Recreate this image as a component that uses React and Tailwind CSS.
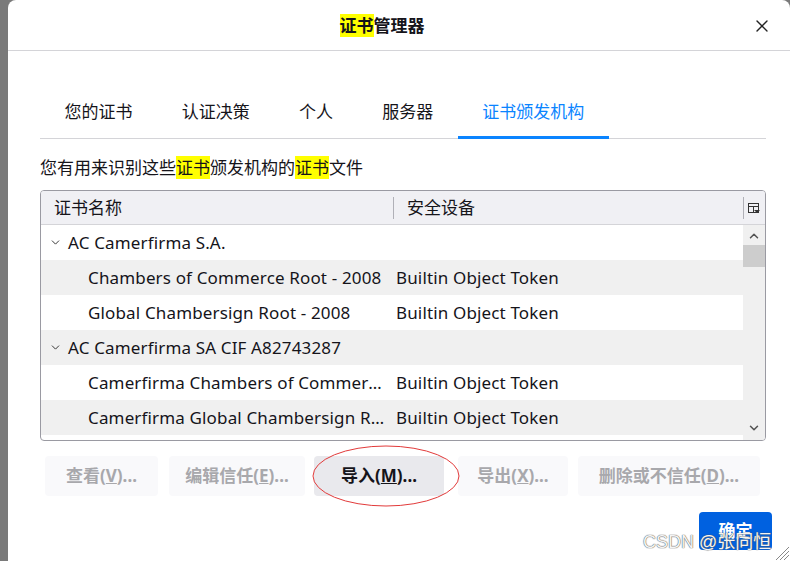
import { X, ChevronDown, ChevronUp } from 'lucide-react';

const font = { fontFamily: '"Noto Sans", "Noto Sans CJK SC", sans-serif' };

const tabs = ['您的证书', '认证决策', '个人', '服务器', '证书颁发机构'];

const rows = [
  { group: true, name: 'AC Camerfirma S.A.' },
  { name: 'Chambers of Commerce Root - 2008', token: 'Builtin Object Token' },
  { name: 'Global Chambersign Root - 2008', token: 'Builtin Object Token' },
  { group: true, name: 'AC Camerfirma SA CIF A82743287' },
  { name: 'Camerfirma Chambers of Commerce Root', token: 'Builtin Object Token' },
  { name: 'Camerfirma Global Chambersign Root', token: 'Builtin Object Token' },
];

const buttons = [
  { label: '查看', key: 'V', w: 'w-[113px]', ml: 'ml-[5px]' },
  { label: '编辑信任', key: 'E', w: 'w-[136px]', ml: 'ml-[11px]' },
  { label: '导入', key: 'M', w: 'w-[130px]', ml: 'ml-[9px]', active: true },
  { label: '导出', key: 'X', w: 'w-[110px]', ml: 'ml-[14px]' },
  { label: '删除或不信任', key: 'D', w: 'w-[182px]', ml: 'ml-[10px]' },
];

function ColumnPicker() {
  return (
    <svg width="12" height="12" viewBox="0 0 12 12" className="text-[#333]">
      <rect x="0.5" y="1.5" width="10" height="9" fill="none" stroke="currentColor" />
      <line x1="0.5" y1="4.5" x2="10.5" y2="4.5" stroke="currentColor" />
      <line x1="5.5" y1="4.5" x2="5.5" y2="10.5" stroke="currentColor" />
      <path d="M6 8 L12 8 L9 11 Z" fill="currentColor" />
    </svg>
  );
}

export default function App() {
  return (
    <div className="relative w-[790px] h-[561px] overflow-hidden bg-[#7a7a7a] pl-2" style={font}>
      <div className="h-[570px] w-[782px] bg-white rounded-t-lg flex flex-col">
        {/* header */}
        <div className="relative h-[51px] shrink-0 border-b border-[#d4d4d8] flex items-center justify-center pr-[34px]">
          <h1 className="text-[17px] font-bold text-[#15141a] leading-none">
            <span className="bg-[#ffff00]">证书</span>管理器
          </h1>
          <X className="absolute right-[18px] top-[16px] w-[20px] h-[20px] text-[#222]" strokeWidth={1.6} />
        </div>

        <div className="pl-[32px] pr-[24px]">
          {/* tabs */}
          <div className="mt-[36px] flex border-b border-[#d4d4d8]">
            {tabs.map((t, i) => (
              <div
                key={t}
                className={`h-[52px] px-[24.6px] flex items-center text-[17px] border-b-[3px] -mb-px ${
                  i === 4 ? 'text-[#0a84ff] border-[#0a84ff]' : 'text-[#15141a] border-transparent'
                }`}
              >
                {t}
              </div>
            ))}
          </div>

          <p className="mt-[17px] text-[17px] leading-[24px] text-[#15141a]">
            您有用来识别这些<span className="bg-[#ffff00]">证书</span>颁发机构的<span className="bg-[#ffff00]">证书</span>文件
          </p>

          {/* tree */}
          <div className="mt-[10px] h-[251px] border border-[#9a9aa2] rounded-[4px] overflow-hidden flex flex-col">
            <div className="h-[34px] shrink-0 bg-[#f0f0f4] border-b border-[#d4d4d8] flex items-center text-[17px] text-[#15141a]">
              <div className="w-[352px] pl-[13px]">证书名称</div>
              <div className="w-px h-[22px] bg-[#b0b0b7]" />
              <div className="flex-1 pl-[13px]">安全设备</div>
              <div className="w-px h-[22px] bg-[#b0b0b7] mr-[3px]" />
              <div className="w-[14px] flex justify-center mr-[4px]"><ColumnPicker /></div>
            </div>
            <div className="flex flex-1 min-h-0">
              <div className="flex-1 min-w-0">
                {rows.map((r, i) => (
                  <div
                    key={r.name}
                    className={`h-[35px] flex items-center text-[17px] text-[#15141a] tracking-[0.15px] ${i % 2 ? 'bg-[#f0f0f0]' : 'bg-white'}`}
                  >
                    {r.group ? (
                      <div className="flex items-center pl-[8px]">
                        <ChevronDown className="w-[13px] h-[13px] text-[#333] mr-[6px]" strokeWidth={1.8} />
                        <span>{r.name}</span>
                      </div>
                    ) : (
                      <>
                        <div className="w-[348px] pl-[47px] pr-[2px] truncate">{r.name}</div>
                        <div className="pl-[7px]">{r.token}</div>
                      </>
                    )}
                  </div>
                ))}
              </div>
              <div className="w-[22px] bg-[#f0f0f0] flex flex-col items-center">
                <div className="h-[20px] w-full flex items-center justify-center pt-[2px]">
                  <ChevronUp className="w-[14px] h-[14px] text-[#555]" strokeWidth={2.6} />
                </div>
                <div className="h-[22px] w-full bg-[#cdcdcd]" />
                <div className="flex-1" />
                <div className="h-[20px] w-full flex items-center justify-center pb-[4px]">
                  <ChevronDown className="w-[14px] h-[14px] text-[#555]" strokeWidth={2.6} />
                </div>
              </div>
            </div>
          </div>

          {/* buttons */}
          <div className="mt-[15px] flex">
            {buttons.map((b) => (
              <button
                key={b.label}
                type="button"
                className={`${b.w} ${b.ml} h-[40px] rounded-[4px] text-[17px] font-bold ${
                  b.active ? 'bg-[#e9e9ed] text-[#15141a]' : 'bg-[#f9f9fb] text-[#a8a8ac]'
                }`}
              >
                {b.label}(<u>{b.key}</u>)...
              </button>
            ))}
          </div>

          <div className="mt-[16px] flex justify-end">
            <button
              type="button"
              className="w-[73px] h-[38px] mr-[-6px] rounded-[4px] bg-[#0061e0] text-white text-[17px] font-bold"
            >
              确定
            </button>
          </div>
        </div>
      </div>

      {/* red annotation */}
      <svg className="absolute left-0 top-0 pointer-events-none" width="790" height="561">
        <ellipse cx="386" cy="476" rx="73" ry="30" fill="none" stroke="#e23a3a" strokeWidth="1" />
        <line x1="776" y1="560" x2="789" y2="547" stroke="#888" />
        <line x1="780" y1="560" x2="789" y2="551" stroke="#888" />
        <line x1="784" y1="560" x2="789" y2="555" stroke="#888" />
      </svg>

      {/* watermark */}
      <div
        className="absolute left-[643px] top-[529px] text-[18px] leading-[26px] text-[#f4f4f4]"
        style={{ fontFamily: '"Liberation Sans", "Noto Sans CJK SC", sans-serif', textShadow: '0 0 1px #555, 0 0 1px #555' }}
      >
        CSDN @张同恒
      </div>
    </div>
  );
}
